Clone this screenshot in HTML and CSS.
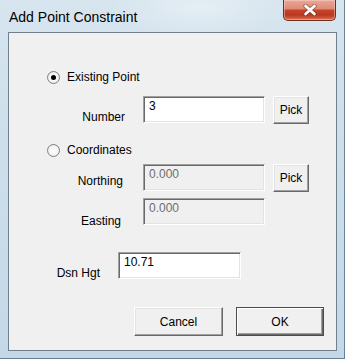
FILE: index.html
```html
<!DOCTYPE html>
<html>
<head>
<meta charset="utf-8">
<link rel="stylesheet" href="styles.css">
</head>
<body>
<div class="window">
  <div class="titlebar">
    <span class="title">Add Point Constraint</span>
    <div class="close">
      <svg width="16" height="12" viewBox="0 0 16 12">
        <path d="M3.5 2 L12.5 10 M12.5 2 L3.5 10" fill="none" stroke="#6b3b33" stroke-width="4.4" stroke-linecap="round" opacity="0.5"/>
        <path d="M3.5 2 L12.5 10 M12.5 2 L3.5 10" fill="none" stroke="#ffffff" stroke-width="2.6" stroke-linecap="round"/>
      </svg>
    </div>
  </div>
  <div class="client">
    <div class="radio-row r1"><span class="radio checked"></span><span>Existing Point</span></div>
    <div class="field-row number">
      <span class="label">Number</span>
      <div class="edit">3</div>
      <div class="btn pick">Pick</div>
    </div>
    <div class="radio-row r2"><span class="radio"></span><span>Coordinates</span></div>
    <div class="field-row northing">
      <span class="label">Northing</span>
      <div class="edit disabled">0.000</div>
      <div class="btn pick">Pick</div>
    </div>
    <div class="field-row easting">
      <span class="label">Easting</span>
      <div class="edit disabled">0.000</div>
    </div>
    <div class="field-row dsn">
      <span class="label">Dsn Hgt</span>
      <div class="edit wide">10.71</div>
    </div>
    <div class="buttons">
      <div class="btn cmd">Cancel</div>
      <div class="btn cmd default">OK</div>
    </div>
  </div>
</div>
</body>
</html>
```
FILE: styles.css
```css
html, body {
  margin: 0;
  padding: 0;
  width: 345px;
  height: 359px;
  overflow: hidden;
}
body {
  font-family: "Liberation Sans", Arial, sans-serif;
  font-size: 12px;
  color: #000;
}
.window {
  width: 345px;
  height: 359px;
  box-sizing: border-box;
  background:
    radial-gradient(ellipse 90px 30px at 200px 8px, rgba(255,255,255,0.35), transparent),
    linear-gradient(180deg, #d7e5ef 0%, #cddfeb 40%, #c4d8e8 100%);
  border-right: 1px solid #6b8193;
  border-bottom: 1px solid #6b8193;
  display: flex;
  flex-direction: column;
}
.titlebar {
  height: 32px;
  display: flex;
  justify-content: space-between;
  align-items: flex-start;
  flex: none;
}
.title {
  font-size: 14px;
  margin: 9px 0 0 9px;
  line-height: 16px;
  color: #000;
}
.close {
  width: 53px;
  height: 21px;
  margin-right: 8px;
  box-sizing: border-box;
  border: 1px solid #6e2c20;
  border-top: none;
  border-radius: 0 0 5px 5px;
  background:
    linear-gradient(180deg, #eaa898 0%, #dd8a76 45%, #c6442a 50%, #b9381f 75%, #d9704e 100%);
  box-shadow: inset 0 0 0 1px rgba(255,220,210,0.45);
  display: flex;
  align-items: center;
  justify-content: center;
}
.client {
  margin: 0 7px 7px 8px;
  flex: 1;
  background: #f0f0f0;
  border: 1px solid #6f7f8c;
  display: flex;
  flex-direction: column;
}
.radio-row {
  display: flex;
  align-items: center;
  gap: 7px;
  height: 14px;
  padding-left: 38px;
}
.r1 { margin-top: 37px; }
.r2 { margin-top: 20px; }
.radio {
  width: 11px;
  height: 11px;
  border-radius: 50%;
  border: 1px solid #808080;
  background: radial-gradient(circle at 50% 50%, #ffffff 0%, #f4f4f4 55%, #d6d6d6 100%);
  box-sizing: content-box;
  position: relative;
}
.radio.checked::after {
  content: "";
  position: absolute;
  left: 3px;
  top: 3px;
  width: 5px;
  height: 5px;
  border-radius: 50%;
  background: #000;
}
.field-row {
  display: flex;
  align-items: flex-start;
  height: 27px;
}
.field-row .label {
  width: 134px;
  box-sizing: border-box;
  text-align: right;
  line-height: 14px;
}
.number { margin-top: 12px; }
.number .label { padding: 14px 18px 0 0; }
.northing { margin-top: 7px; }
.northing .label { padding: 10px 20px 0 0; }
.easting { margin-top: 7px; }
.easting .label { padding: 16px 22px 0 0; }
.dsn { margin-top: 27px; }
.dsn .label { width: 109px; padding: 14px 18px 0 0; }
.edit {
  width: 122px;
  height: 27px;
  box-sizing: border-box;
  background: #fff;
  border: 1px solid;
  border-color: #a0a0a0 #ffffff #ffffff #a0a0a0;
  box-shadow: inset 1px 1px 0 #696969, inset -1px -1px 0 #e3e3e3;
  padding: 2px 5px;
  line-height: 14px;
}
.edit.disabled {
  background: #f0f0f0;
  color: #6d6d6d;
}
.edit.wide { width: 123px; }
.btn {
  box-sizing: border-box;
  border: 1px solid;
  border-color: #ffffff #696969 #696969 #ffffff;
  box-shadow: inset -1px -1px 0 #a0a0a0, inset 1px 1px 0 #e3e3e3;
  background: #f0f0f0;
  display: flex;
  align-items: center;
  justify-content: center;
}
.pick {
  width: 36px;
  height: 28px;
  margin-left: 8px;
}
.buttons {
  display: flex;
  justify-content: flex-end;
  gap: 13px;
  margin-top: 28px;
  padding-right: 12px;
}
.cmd {
  width: 89px;
  height: 29px;
}
.cmd.default {
  width: 88px;
  border: 1px solid #4c4c4c;
  box-shadow: inset 1px 1px 0 #ffffff, inset -1px -1px 0 #696969, inset -2px -2px 0 #a0a0a0;
}
```
